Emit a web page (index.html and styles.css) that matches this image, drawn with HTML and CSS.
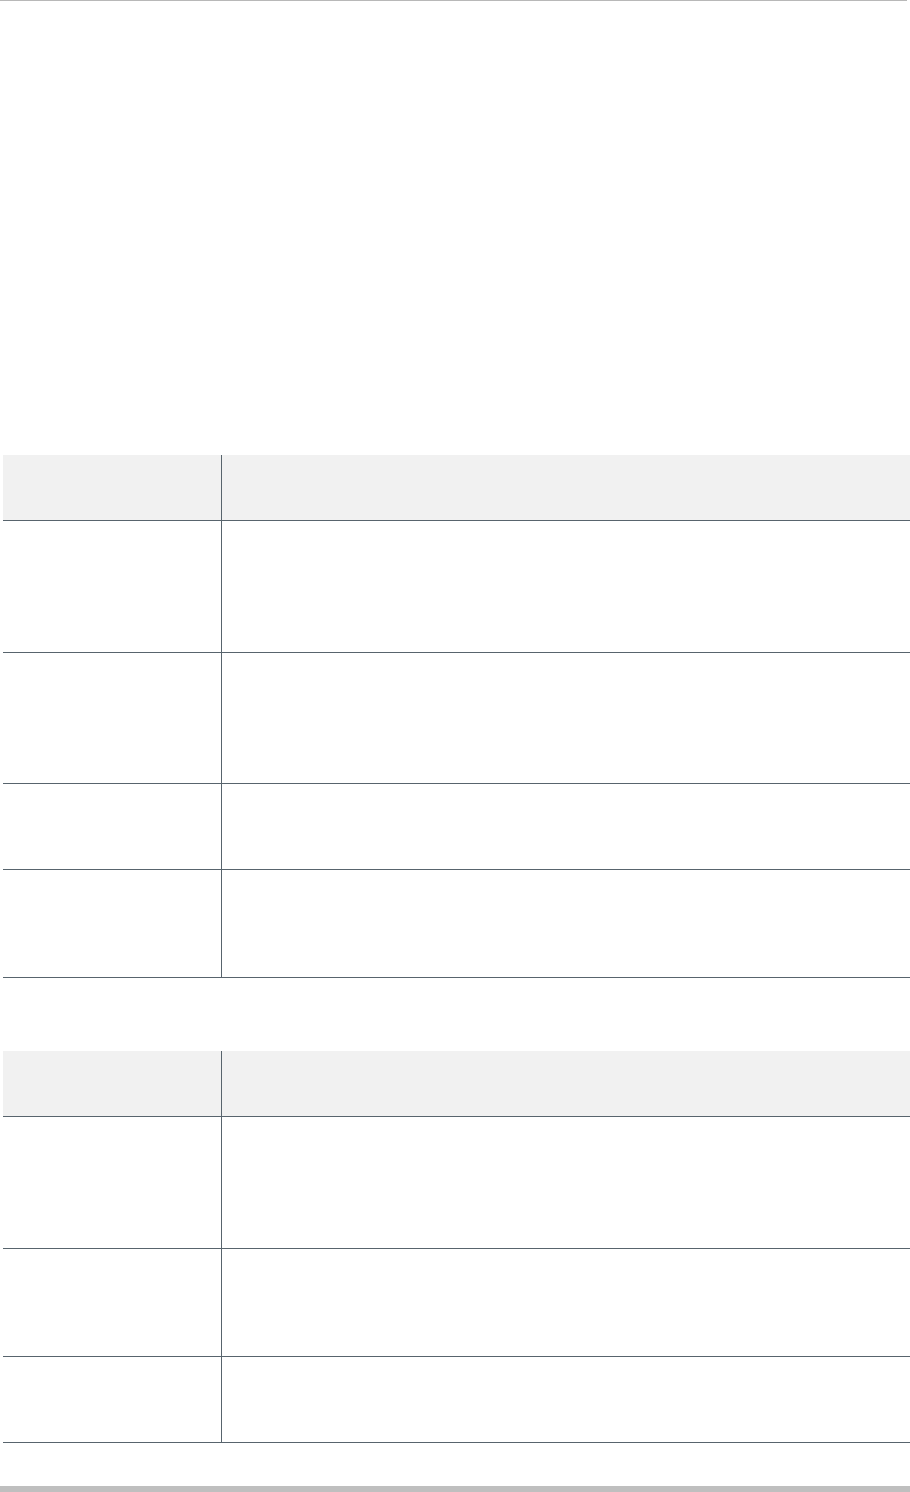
FILE: index.html
```html
<!DOCTYPE html>
<html lang="en">
<head>
<meta charset="utf-8">
<title>Tables</title>
<link rel="stylesheet" href="styles.css">
</head>
<body>
<div class="page">
  <div class="topline"></div>
  <main class="content">
    <section class="grid-table first">
      <div class="row head"><div class="cell key"></div><div class="cell val"></div></div>
      <div class="row h132"><div class="cell key"></div><div class="cell val"></div></div>
      <div class="row h131"><div class="cell key"></div><div class="cell val"></div></div>
      <div class="row h86"><div class="cell key"></div><div class="cell val"></div></div>
      <div class="row h108"><div class="cell key"></div><div class="cell val"></div></div>
    </section>
    <section class="grid-table second">
      <div class="row head"><div class="cell key"></div><div class="cell val"></div></div>
      <div class="row h132"><div class="cell key"></div><div class="cell val"></div></div>
      <div class="row h108"><div class="cell key"></div><div class="cell val"></div></div>
      <div class="row h86"><div class="cell key"></div><div class="cell val"></div></div>
    </section>
  </main>
  <div class="bottombar"></div>
</div>
</body>
</html>
```

FILE: styles.css
```css
* { box-sizing: border-box; }
html, body {
  margin: 0;
  padding: 0;
  background: #ffffff;
  font-family: "Liberation Sans", Arial, sans-serif;
}
.page {
  width: 910px;
  height: 1492px;
  display: flex;
  flex-direction: column;
}
.topline {
  height: 1px;
  width: 907px;
  background: #b8b8b8;
}
.content {
  flex: 1;
  display: flex;
  flex-direction: column;
  padding-left: 3px;
}
.grid-table {
  display: flex;
  flex-direction: column;
}
.grid-table.first { margin-top: 454px; }
.grid-table.second { margin-top: 73px; }
.row {
  display: grid;
  grid-template-columns: 219px 1fr;
  border-bottom: 1px solid #58646d;
}
.row.head {
  height: 66px;
  background: #f1f1f1;
}
.h132 { height: 132px; }
.h131 { height: 131px; }
.h108 { height: 108px; }
.h86 { height: 86px; }
.cell.key {
  border-right: 1px solid #58646d;
}
.bottombar {
  height: 6px;
  background: #bfbfbf;
}
```
